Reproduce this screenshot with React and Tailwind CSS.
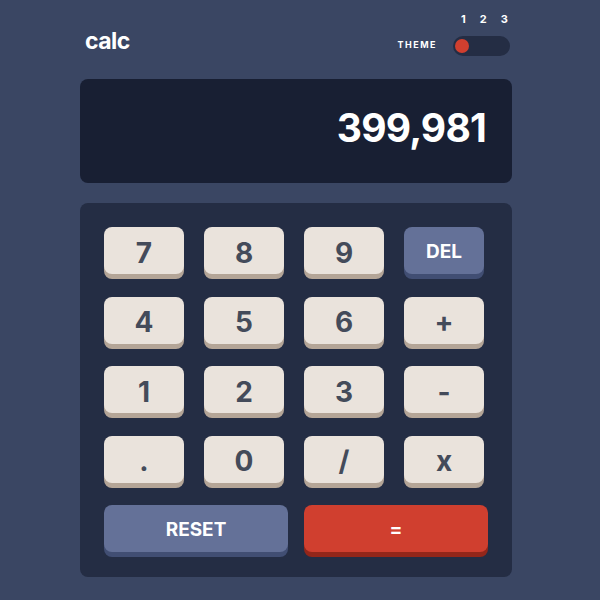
const rows = [
  ['7', '8', '9', 'DEL'],
  ['4', '5', '6', '+'],
  ['1', '2', '3', '-'],
  ['.', '0', '/', 'x'],
]

function Key({ label }) {
  const isDel = label === 'DEL'
  return (
    <button
      className={`w-[80px] h-[47px] pt-[4px] rounded-[8px] flex items-center justify-center font-bold
        ${isDel
          ? 'bg-[#647198] text-white text-[19px] shadow-[0_5px_0_#414e73]'
          : 'bg-[#eae3dc] text-[#444b5a] text-[28px] shadow-[0_5px_0_#b4a597]'}`}
    >
      {label}
    </button>
  )
}

export default function App() {
  return (
    <div className="min-h-screen bg-[#3a4663] font-['Inter','Liberation_Sans',sans-serif]">
      <div className="w-[432px] ml-[80px]">
        {/* Header */}
        <header className="h-[79px] flex items-end justify-between pb-[23px] pl-[5px] pr-[2px]">
          <h1 className="text-white text-[23px] font-bold leading-none tracking-[-0.5px] mb-[3px]">calc</h1>
          <div className="flex items-end gap-[16px]">
            <span className="text-white text-[9px] font-bold tracking-[1.5px] mb-[5px]">THEME</span>
            <div className="flex flex-col w-[57px]">
              <div className="flex gap-[14px] pl-[8px] text-white text-[11px] font-bold leading-none mb-[11px]">
                <span>1</span>
                <span>2</span>
                <span>3</span>
              </div>
              <div className="h-[20px] rounded-full bg-[#242d44] flex items-center px-[2px]">
                <div className="w-[14px] h-[14px] rounded-full bg-[#d03f2f]" />
              </div>
            </div>
          </div>
        </header>

        {/* Screen */}
        <div className="h-[104px] rounded-[8px] bg-[#181f33] flex items-center justify-end pr-[26px] pb-[8px]">
          <span className="text-white text-[39px] font-bold tracking-[-0.8px] leading-none">399,981</span>
        </div>

        {/* Keypad */}
        <div className="mt-[20px] rounded-[8px] bg-[#242d44] pt-[24px] pb-[25px] px-[24px]">
          <div className="flex flex-col gap-[22.5px]">
            {rows.map((row, i) => (
              <div key={i} className="flex gap-[20px]">
                {row.map((k) => (
                  <Key key={k} label={k} />
                ))}
              </div>
            ))}
            <div className="flex justify-between">
              <button className="w-[184px] h-[47px] pt-[4px] rounded-[8px] bg-[#647198] text-white text-[19px] font-bold shadow-[0_5px_0_#414e73]">
                RESET
              </button>
              <button className="w-[184px] h-[47px] pt-[4px] rounded-[8px] bg-[#d03f2f] text-white text-[19px] font-bold shadow-[0_5px_0_#93261a]">
                =
              </button>
            </div>
          </div>
        </div>
      </div>
    </div>
  )
}
